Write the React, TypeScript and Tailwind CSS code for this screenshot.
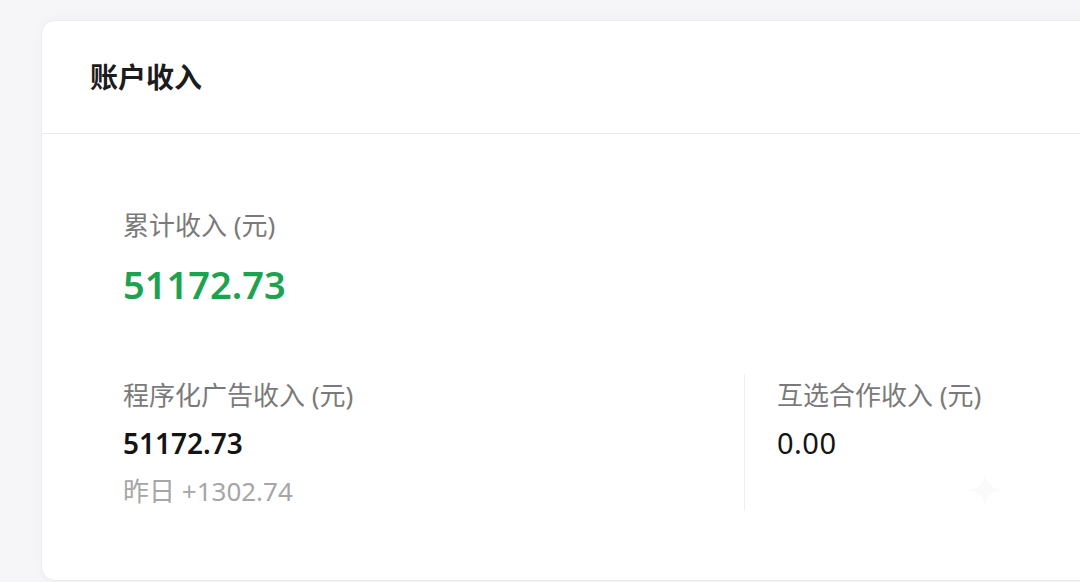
import React from 'react'

const font = { fontFamily: '"Noto Sans", "Noto Sans CJK SC", sans-serif' }

function Stat({ label, value, sub, light }: { label: string; value: string; sub?: string; light?: boolean }) {
  return (
    <div className="flex flex-col">
      <div className="text-[26px] leading-[32px] text-[#7a7a7a]">{label}</div>
      <div
        className={
          light
            ? 'mt-[16px] text-[29px] leading-[32px] font-normal tracking-[0.5px] text-[#141414]'
            : 'mt-[16px] text-[28px] leading-[32px] font-semibold text-[#141414]'
        }
      >
        {value}
      </div>
      {sub && <div className="mt-[16px] text-[26px] leading-[32px] text-[#a6a6a6]">{sub}</div>}
    </div>
  )
}

export default function App() {
  return (
    <div className="h-[582px] w-[1080px] overflow-hidden bg-[#f6f6f8] pl-[41px] pt-[20px]" style={font}>
      <div className="h-[561px] w-[1080px] rounded-l-[14px] border border-[#ececf0] bg-white shadow-[0_0_12px_rgba(0,0,0,0.03)]">
        <div className="flex h-[113px] items-center border-b border-[#ebebeb] pl-[48px]">
          <h1 className="text-[28px] font-semibold text-[#1c1c1c]">账户收入</h1>
        </div>

        <div className="relative px-[81px] pt-[75px]">
          <div className="text-[26px] leading-[32px] text-[#7a7a7a]">累计收入 (元)</div>
          <div className="mt-[21px] text-[38px] leading-[44px] font-semibold text-[#1da24f]">51172.73</div>

          <div className="mt-[68px] flex">
            <div className="w-[622px] border-r border-[#eeeeee] pt-[5px] pb-[4px]">
              <Stat label="程序化广告收入 (元)" value="51172.73" sub="昨日 +1302.74" />
            </div>
            <div className="pl-[32px] pt-[5px]">
              <Stat label="互选合作收入 (元)" value="0.00" light />
            </div>
          </div>

          {/* faint sparkle watermark */}
          <svg className="absolute left-[925px] top-[338px]" width="36" height="36" viewBox="0 0 40 40">
            <path d="M20 2 Q22 18 38 20 Q22 22 20 38 Q18 22 2 20 Q18 18 20 2Z" fill="#fafafa" />
          </svg>
        </div>
      </div>
    </div>
  )
}
